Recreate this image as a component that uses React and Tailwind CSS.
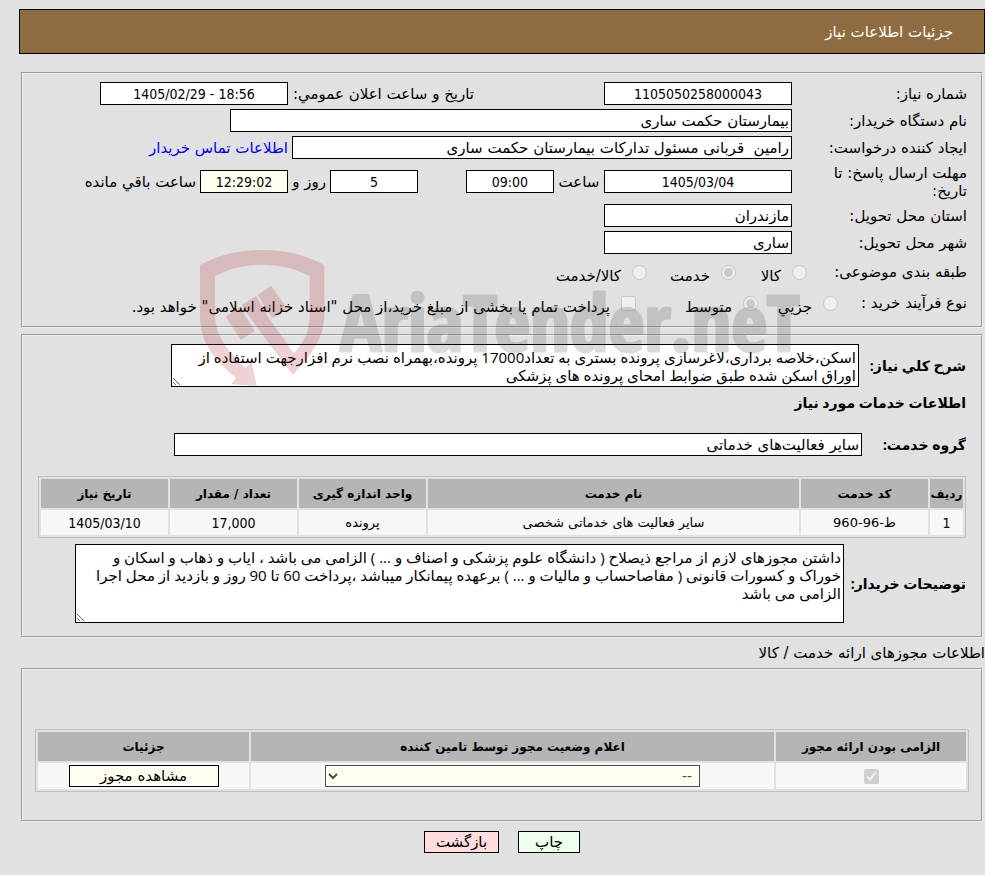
const field = 'h-[23px] shrink-0 border border-black bg-white px-[2px]';
const area = "resize border border-black bg-white px-[2px] py-[3px] font-['Open_Sans','DejaVu_Sans',sans-serif]";
const numeric = "text-center font-['DejaVu_Sans_Condensed','DejaVu_Sans',sans-serif] text-[14px] leading-5";
const strong = "font-['Open_Sans','DejaVu_Sans',sans-serif] text-[14px] font-bold whitespace-nowrap";
const groove = 'ml-[21px] mr-[2px] border-2 border-[#f0f0f0] [border-style:groove]';
const gridTable = 'w-full table-fixed border-separate border-spacing-[2px] border border-[#bfbfbf] text-center';
const th = 'h-[29px] bg-[#b5b5b5] text-[12px] font-bold';
const td = 'h-[25px] bg-[#f7f7f7] text-[13px]';

const services = [
  { id: 1, code: 'ط-96-960', name: 'سایر فعالیت های خدماتی شخصی', unit: 'پرونده', amount: '17,000', date: '1405/03/10' },
];

const summary = `اسکن،خلاصه برداری،لاغرسازی پرونده بستری به تعداد17000 پرونده،بهمراه نصب نرم افزارجهت استفاده از
اوراق اسکن شده طبق ضوابط امحای پرونده های پزشکی`;

const buyerNotes = `داشتن مجوزهای لازم از مراجع ذیصلاح ( دانشگاه علوم پزشکی و اصناف و ... ) الزامی می باشد ، ایاب و ذهاب و اسکان و
خوراک و کسورات قانونی ( مفاصاحساب و مالیات و ... ) برعهده پیمانکار میباشد ،پرداخت 60 تا 90 روز و بازدید از محل اجرا
الزامی می باشد`;

function Row({ id, label, children, className = 'h-[27px]' }) {
  return (
    <div className={`flex items-center ${className}`}>
      <div className="w-[175px] shrink-0 pl-[30px]">
        <label htmlFor={id}>{label}</label>
      </div>
      {children}
    </div>
  );
}

function Choice({ id, name, type = 'radio', label, checked = false, className = '' }) {
  return (
    <>
      <input id={id} name={name} type={type} defaultChecked={checked} disabled className="size-[15px] shrink-0" />
      <label htmlFor={id} className={`shrink-0 pt-2 pr-[11px] whitespace-nowrap ${className}`}>{label}</label>
    </>
  );
}

function Watermark() {
  return (
    <svg
      viewBox="0 0 600 140"
      className="pointer-events-none absolute top-[248px] left-[200px] h-[140px] w-[600px]"
      aria-hidden="true"
    >
      <g fill="#af2327" fillOpacity="0.2" transform="translate(-10 -8) scale(0.33333)">
        <path d="M30 75Q112 30 216 30Q322 30 403 75V222C403 290 372 335 309 405L205 268L155 195L198 168L241 241L311 340Q359 290 359 228V108Q295 74 216 74Q140 74 75 108V222C75 290 112 330 168 385L185 365L200 438L123 433L138 414C70 355 30 310 30 222Z" />
        <path d="M107 230L148 200L194 272L153 300Z" />
        <path d="M203 165L243 137L291 205L247 235Z" />
      </g>
      <text
        x="140"
        y="103"
        direction="ltr"
        fill="#373737"
        stroke="#373737"
        strokeWidth="3"
        strokeLinejoin="round"
        opacity="0.18"
        className="font-['Open_Sans_Condensed','Roboto_Condensed',sans-serif] text-[78px] font-bold"
      >
        AriaTender.neT
      </text>
    </svg>
  );
}

export default function App() {
  return (
    <div
      dir="rtl"
      lang="fa"
      className="relative min-h-screen bg-[#e1e1e1] pt-[9px] font-['DejaVu_Sans',sans-serif] text-[15px] leading-[18px] text-black"
    >
      <header className="ml-[19px] flex h-[45px] items-center border border-black bg-[#8f6c40] pr-[31px] text-white">
        <h1>جزئیات اطلاعات نیاز</h1>
      </header>

      <fieldset className={`${groove} mt-[18px] pt-1.5 pr-[14px] pb-2`}>
        <Row id="number" label="شماره نیاز:">
          <input id="number" readOnly value="1105050258000043" className={`${field} ${numeric} w-47`} />
          <label htmlFor="announced" className="mr-[130px] w-[186px] shrink-0 whitespace-nowrap">تاریخ و ساعت اعلان عمومي:</label>
          <input id="announced" dir="ltr" readOnly value="1405/02/29 - 18:56" className={`${field} ${numeric} w-47`} />
        </Row>
        <Row id="buyer" label="نام دستگاه خریدار:">
          <input id="buyer" readOnly value="بیمارستان حکمت ساری" className={`${field} w-[562px]`} />
        </Row>
        <Row id="creator" label="ایجاد کننده درخواست:">
          <input id="creator" readOnly value="رامین  قربانی مسئول تدارکات بیمارستان حکمت ساری" className={`${field} w-[500px]`} />
          <a href="#contact" className="mr-1 whitespace-nowrap text-[#0000ff]">اطلاعات تماس خریدار</a>
        </Row>
        <Row id="deadline" label="مهلت ارسال پاسخ: تا تاریخ:" className="h-[41px]">
          <input id="deadline" dir="ltr" readOnly value="1405/03/04" className={`${field} ${numeric} w-47`} />
          <label htmlFor="hour" className="w-[50px] shrink-0 text-center">ساعت</label>
          <input id="hour" dir="ltr" readOnly value="09:00" className={`${field} ${numeric} w-22`} />
          <input id="days" readOnly value="5" className={`${field} ${numeric} mr-12 w-22`} />
          <label htmlFor="days" className="w-[42px] shrink-0 pr-1 whitespace-nowrap">روز و</label>
          <input id="remaining" dir="ltr" readOnly value="12:29:02" className={`h-[23px] w-22 shrink-0 border border-black bg-[#fffff0] ${numeric}`} />
          <label htmlFor="remaining" className="mr-1 whitespace-nowrap">ساعت باقي مانده</label>
        </Row>
        <Row id="province" label="استان محل تحویل:">
          <input id="province" readOnly value="مازندران" className={`${field} w-47`} />
        </Row>
        <Row id="city" label="شهر محل تحویل:">
          <input id="city" readOnly value="ساری" className={`${field} w-47`} />
        </Row>
        <div role="radiogroup" aria-labelledby="category" className="flex h-8 items-center">
          <span id="category" className="w-[160px] shrink-0">طبقه بندی موضوعی:</span>
          <Choice id="goods" name="category" label="کالا" className="w-[56px]" />
          <Choice id="service" name="category" label="خدمت" checked className="w-[74px]" />
          <Choice id="both" name="category" label="کالا/خدمت" />
        </div>
        <div role="radiogroup" aria-labelledby="process" className="flex h-[30px] items-center">
          <span id="process" className="w-[129px] shrink-0">نوع فرآیند خرید :</span>
          <Choice id="small" name="process" label="جزيي" className="w-[65px]" />
          <Choice id="medium" name="process" label="متوسط" checked className="w-[107px]" />
          <Choice id="treasury" name="treasury" type="checkbox" label={'پرداخت تمام یا بخشی از مبلغ خرید،از محل "اسناد خزانه اسلامی" خواهد بود.'} />
        </div>
      </fieldset>

      <fieldset className={`${groove} mt-1.5 px-[15px] pt-2 pb-[13px]`}>
        <div className="flex items-center">
          <label htmlFor="summary" className={`w-[107px] shrink-0 ${strong}`}>شرح كلي نیاز:</label>
          <textarea id="summary" readOnly defaultValue={summary} className={`h-[43px] w-[688px] ${area}`} />
        </div>
        <h2 className={`flex h-8 items-center ${strong}`}>اطلاعات خدمات مورد نیاز</h2>
        <div className="mt-[14px] flex items-center">
          <label htmlFor="group" className={`w-[104px] shrink-0 ${strong}`}>گروه خدمت:</label>
          <input id="group" readOnly value="سایر فعالیت‌های خدماتی" className={`${field} w-[688px]`} />
        </div>
        <table className={`${gridTable} mt-5`}>
          <colgroup>
            <col className="w-[33px]" />
            <col className="w-[127px]" />
            <col />
            <col className="w-[127px]" />
            <col className="w-[127px]" />
            <col className="w-[127px]" />
          </colgroup>
          <thead>
            <tr>
              <th className={`${th} whitespace-nowrap`}>ردیف</th>
              <th className={th}>کد خدمت</th>
              <th className={th}>نام خدمت</th>
              <th className={th}>واحد اندازه گیری</th>
              <th className={th}>تعداد / مقدار</th>
              <th className={th}>تاریخ نیاز</th>
            </tr>
          </thead>
          <tbody>
            {services.map((s) => (
              <tr key={s.id}>
                <td className={`${td} ${numeric}`}>{s.id}</td>
                <td className={td}>{s.code}</td>
                <td className={td}>{s.name}</td>
                <td className={td}>{s.unit}</td>
                <td className={`${td} ${numeric}`}>{s.amount}</td>
                <td className={`${td} ${numeric}`}>{s.date}</td>
              </tr>
            ))}
          </tbody>
        </table>
        <div className="mt-1.5 flex items-center">
          <label htmlFor="notes" className={`w-[122px] shrink-0 ${strong}`}>توضیحات خریدار:</label>
          <textarea id="notes" readOnly defaultValue={buyerNotes} className={`h-[79px] w-[769px] ${area}`} />
        </div>
      </fieldset>

      <h2 className="flex h-[30px] items-center">اطلاعات مجوزهای ارائه خدمت / کالا</h2>

      <fieldset className={`${groove} px-3 pt-[59px] pb-7`}>
        <table className={gridTable}>
          <colgroup>
            <col className="w-[190px]" />
            <col />
            <col className="w-[211px]" />
          </colgroup>
          <thead>
            <tr>
              <th className={th}>الزامی بودن ارائه مجوز</th>
              <th className={th}>اعلام وضعیت مجوز توسط تامین کننده</th>
              <th className={th}>جزئیات</th>
            </tr>
          </thead>
          <tbody>
            <tr>
              <td className="h-[26px] bg-[#f7f7f7]">
                <input type="checkbox" aria-label="الزامی بودن ارائه مجوز" defaultChecked disabled className="mx-auto block size-[15px]" />
              </td>
              <td className="h-[26px] bg-[#f7f7f7]">
                <select aria-label="اعلام وضعیت مجوز" disabled className="mx-auto block h-[22px] w-[375px] border border-[#4c4c4c] bg-[#fffff0] px-[3px] text-[14px] text-[#4c4c4c] opacity-100">
                  <option>--</option>
                </select>
              </td>
              <td className="h-[26px] bg-[#f7f7f7]">
                <button type="button" className="mx-auto block h-[22px] w-[150px] border border-black bg-[#fffff0]">مشاهده مجوز</button>
              </td>
            </tr>
          </tbody>
        </table>
      </fieldset>

      <div className="mt-[9px] flex justify-center gap-[19px] pl-[19px]">
        <button type="button" className="h-[22px] w-[62px] border border-black bg-[#eeffee]">چاپ</button>
        <button type="button" className="h-[22px] w-[75px] border border-black bg-[#ffdddd]">بازگشت</button>
      </div>

      <Watermark />
    </div>
  );
}
